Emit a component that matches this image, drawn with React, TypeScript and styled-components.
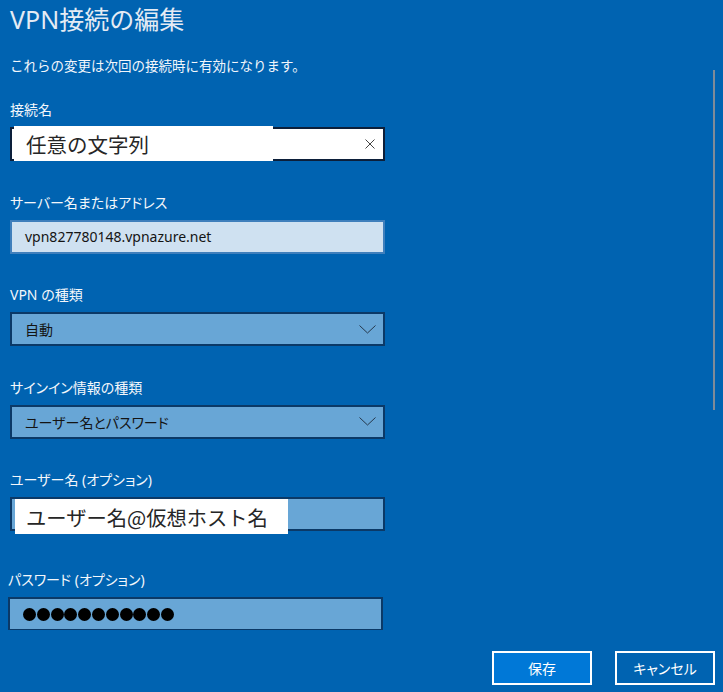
import React, { FC } from 'react';
import styled, { createGlobalStyle } from 'styled-components';

const GlobalStyle = createGlobalStyle`
  html, body {
    margin: 0;
    padding: 0;
    background: #0063b1;
  }
  body {
    font-family: 'Segoe UI', 'Noto Sans', 'Noto Sans CJK JP', sans-serif;
  }
`;

const Page = styled.div`
  position: relative;
  width: 723px;
  height: 692px;
  overflow: hidden;
  display: flex;
  flex-direction: column;
  background: #0063b1;
  color: #ffffff;
`;

const Header = styled.header`
  padding: 1px 10px 0;
`;

const Title = styled.h1`
  margin: 0;
  font-family: 'Noto Sans', 'Noto Sans CJK JP', sans-serif;
  font-size: 25px;
  font-weight: 400;
  line-height: 36px;
  color: #e4ebf4;
`;

const Note = styled.p`
  margin: 18px 0 0;
  font-family: 'Noto Sans CJK JP', sans-serif;
  font-size: 13.5px;
  line-height: 20px;
  color: #f2f6fb;
`;

const ScrollArea = styled.div`
  height: 555px;
  overflow: hidden;
  padding: 25px 10px 0;
  box-sizing: border-box;
  display: flex;
  flex-direction: column;
  gap: 31.5px;
`;

const ScrollThumb = styled.div`
  position: absolute;
  top: 70px;
  left: 713px;
  width: 2px;
  height: 340px;
  background: #7f8b98;
`;

const Field = styled.div<{ $shift?: number; $extra?: number }>`
  display: flex;
  flex-direction: column;
  gap: 7px;
  margin-left: ${({ $shift }) => $shift ?? 0}px;
  margin-top: ${({ $extra }) => $extra ?? 0}px;
`;

const Label = styled.label`
  font-family: 'Noto Sans', 'Noto Sans CJK JP', sans-serif;
  font-feature-settings: 'palt';
  font-size: 14px;
  line-height: 20px;
  color: #f4f7fb;
`;

type Tone = 'white' | 'pale' | 'mid';

const fills: Record<Tone, string> = {
  white: '#ffffff',
  pale: '#cfe1f1',
  mid: '#68a6d6',
};

const borders: Record<Tone, string> = {
  white: '#0c1f3a',
  pale: '#3f7fbc',
  mid: '#0b3967',
};

const Box = styled.div<{ $tone: Tone }>`
  position: relative;
  width: 375px;
  height: 34px;
  box-sizing: border-box;
  border: 2px solid ${({ $tone }) => borders[$tone]};
  background: ${({ $tone }) => fills[$tone]};
  display: flex;
  align-items: center;
  padding: 0 7px 0 13px;
  color: #111111;
`;

const Value = styled.span`
  flex: 1;
  font-family: 'Noto Sans', 'Noto Sans CJK JP', sans-serif;
  font-feature-settings: 'palt';
  font-size: 14px;
  color: #141414;
`;

const Mask = styled.div<{ $left: number; $top: number; $width: number; $size: number }>`
  position: absolute;
  left: ${({ $left }) => $left}px;
  top: ${({ $top }) => $top}px;
  width: ${({ $width }) => $width}px;
  height: 35px;
  background: #ffffff;
  display: flex;
  align-items: center;
  padding-left: ${({ $left }) => 14 - $left}px;
  box-sizing: border-box;
  white-space: nowrap;
  overflow: hidden;
  font-family: 'Noto Sans CJK JP', sans-serif;
  font-size: ${({ $size }) => $size}px;
  color: #262626;
`;

const Dots = styled.div`
  display: flex;
  gap: 0.8px;
`;

const Dot = styled.span`
  width: 13px;
  height: 13px;
  border-radius: 50%;
  background: #000000;
`;

const Footer = styled.footer`
  display: flex;
  justify-content: flex-end;
  gap: 23px;
  padding: 21px 8px 0 0;
`;

const Button = styled.button<{ $primary?: boolean }>`
  width: 100px;
  height: 34px;
  box-sizing: border-box;
  border: 2px solid #ffffff;
  background: ${({ $primary }) => ($primary ? '#0078d7' : '#0063b1')};
  color: #ffffff;
  font-family: 'Noto Sans CJK JP', sans-serif;
  font-feature-settings: 'palt';
  font-size: 14px;
  padding: 0;
`;

const Clear: FC = () => (
  <svg width="12" height="12" viewBox="0 0 12 12">
    <path d="M1.5 1.5 L10.5 10.5 M10.5 1.5 L1.5 10.5" stroke="#444444" strokeWidth="1" fill="none" />
  </svg>
);

const Chevron: FC = () => (
  <svg width="17" height="9" viewBox="0 0 17 9">
    <path d="M0.5 0.5 L8.5 8 L16.5 0.5" stroke="#26384c" strokeWidth="1" fill="none" />
  </svg>
);

const App: FC = () => (
  <>
    <GlobalStyle />
    <Page>
      <Header>
        <Title>VPN接続の編集</Title>
        <Note>これらの変更は次回の接続時に有効になります。</Note>
      </Header>
      <ScrollArea>
        <Field>
          <Label>接続名</Label>
          <Box $tone="white">
            <Value />
            <Clear />
            <Mask $left={2} $top={-3} $width={259} $size={20.5}>
              任意の文字列
            </Mask>
          </Box>
        </Field>
        <Field>
          <Label>サーバー名またはアドレス</Label>
          <Box $tone="pale">
            <Value>vpn827780148.vpnazure.net</Value>
          </Box>
        </Field>
        <Field>
          <Label>VPN の種類</Label>
          <Box $tone="mid">
            <Value>自動</Value>
            <Chevron />
          </Box>
        </Field>
        <Field>
          <Label>サインイン情報の種類</Label>
          <Box $tone="mid">
            <Value>ユーザー名とパスワード</Value>
            <Chevron />
          </Box>
        </Field>
        <Field>
          <Label>ユーザー名 (オプション)</Label>
          <Box $tone="mid">
            <Value />
            <Mask $left={3} $top={0} $width={273} $size={20.3}>
              ユーザー名@仮想ホスト名
            </Mask>
          </Box>
        </Field>
        <Field $shift={-2} $extra={7.5}>
          <Label>パスワード (オプション)</Label>
          <Box $tone="mid">
            <Dots>
              {Array.from({ length: 11 }, (_, i) => (
                <Dot key={i} />
              ))}
            </Dots>
          </Box>
        </Field>
      </ScrollArea>
      <Footer>
        <Button $primary>保存</Button>
        <Button>キャンセル</Button>
      </Footer>
      <ScrollThumb />
    </Page>
  </>
);

export default App;
